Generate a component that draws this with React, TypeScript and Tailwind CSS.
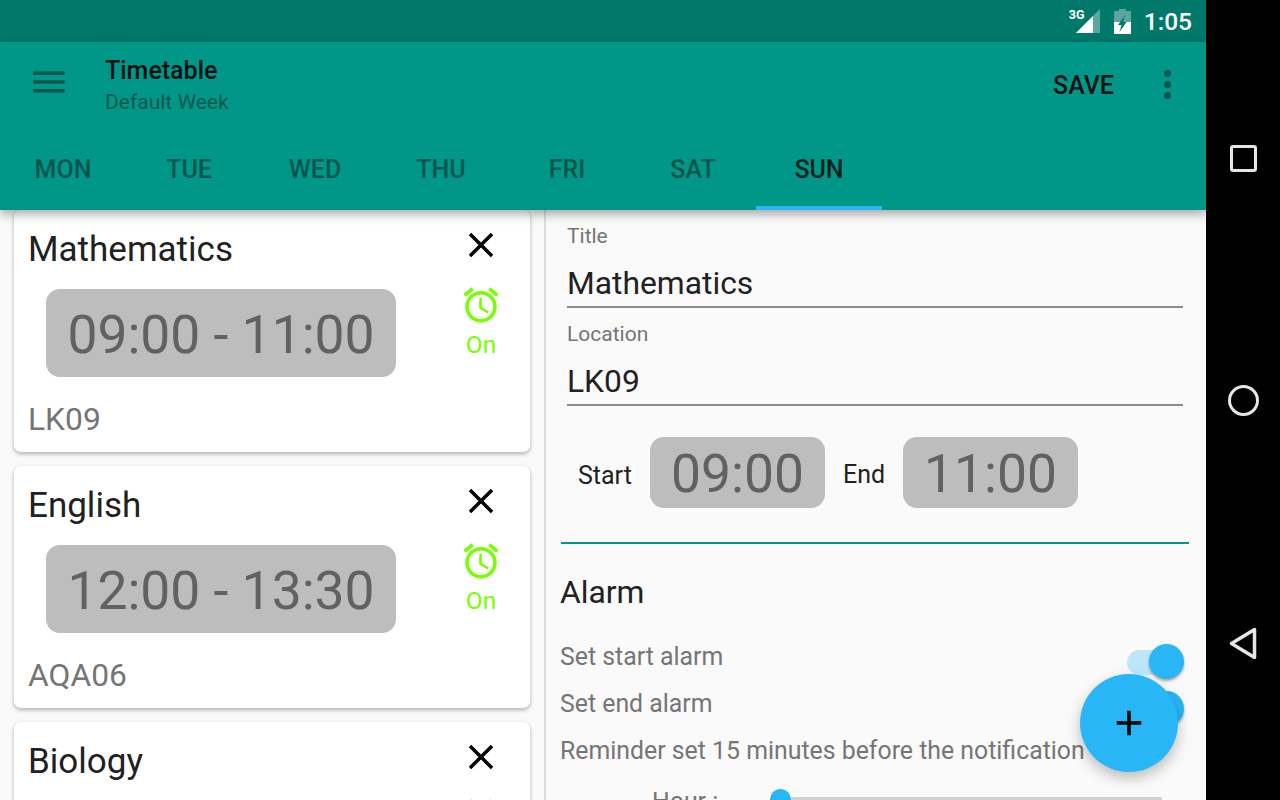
const days = ["MON", "TUE", "WED", "THU", "FRI", "SAT", "SUN"]

const lessons = [
  { title: "Mathematics", time: "09:00 - 11:00", room: "LK09" },
  { title: "English", time: "12:00 - 13:30", room: "AQA06" },
  { title: "Biology" },
]

function StatusBar() {
  return (
    <div className="flex h-[42px] shrink-0 items-center justify-end bg-[#00796b] pr-[14px] text-white">
      <div className="relative h-[42px] w-[36px]">
        <span className="absolute left-[5px] top-[8px] text-[12.500px] font-bold leading-[14px]">3G</span>
        <svg className="absolute left-[12px] top-[9px]" width="24" height="24" viewBox="0 0 24 24">
          <polygon points="24,0 24,24 0,24" fill="#fff" fillOpacity="0.35" />
          <polygon points="17,7 17,24 0,24" fill="#fff" />
        </svg>
      </div>
      <svg className="ml-[14px]" width="17" height="25" viewBox="0 0 17 25">
        <path d="M5 0h7v2h5v23H0V2h5z" fill="#fff" fillOpacity="0.35" />
        <path d="M0 13h17v12H0z" fill="#fff" />
        <path d="M11 6L4 16h3.500L5.500 23l7-10H9z" fill="#00796b" />
      </svg>
      <span className="ml-[13px] pt-[2px] text-[24.500px] font-medium leading-none">1:05</span>
    </div>
  )
}

function AppBar() {
  return (
    <div className="relative z-10 h-[168px] shrink-0 bg-[#009688] shadow-[0_4px_10px_rgba(0,0,0,0.35)]">
      <div className="flex h-[98px] items-center pb-[18px]">
        <svg className="ml-[28px] text-[#00564c]" width="42" height="42" viewBox="0 0 24 24" fill="currentColor">
          <path d="M3 18h18v-2H3v2zm0-5h18v-2H3v2zm0-5h18V6H3v2z" />
        </svg>
        <div className="ml-[35px] flex-1 pt-[10px]">
          <div className="pt-[1px] text-[25px] font-medium leading-[29px] text-black/90">Timetable</div>
          <div className="text-[21px] leading-[34px] text-[#00564c]">Default Week</div>
        </div>
        <span className="pt-[8px] text-[25px] font-medium text-black/90">SAVE</span>
        <div className="ml-[32px] mr-[18px] flex w-[42px] flex-col items-center gap-[4px] pt-[4px]">
          <span className="h-[7px] w-[7px] rounded-full bg-[#00564c]" />
          <span className="h-[7px] w-[7px] rounded-full bg-[#00564c]" />
          <span className="h-[7px] w-[7px] rounded-full bg-[#00564c]" />
        </div>
      </div>
      <div className="flex h-[70px]">
        {days.map((day) => (
          <div
            key={day}
            className={`flex h-[70px] w-[126px] items-center justify-center text-[25px] font-medium ${
              day === "SUN" ? "border-b-[4px] border-[#29b6f6] pb-[6px] text-black/80" : "pb-[10px] text-[#00564c]"
            }`}
          >
            {day}
          </div>
        ))}
      </div>
    </div>
  )
}

function LessonCard({ title, time, room }: { title: string; time?: string; room?: string }) {
  return (
    <div className="flex h-[242px] shrink-0 overflow-hidden rounded-[7px] bg-white shadow-[0_2px_4px_rgba(0,0,0,0.3)]">
      <div className="w-[417px] shrink-0">
        <div className="flex h-[79px] items-center pl-[14px] pt-[2px] text-[35px] text-[#212121]">{title}</div>
        {time && (
          <div className="ml-[32px] flex h-[88px] w-[350px] items-center justify-center rounded-[14px] bg-[#bdbdbd] pt-[4px] text-[53.400px] text-[#616161]">
            {time}
          </div>
        )}
        {room && <div className="mt-[25px] pl-[14px] text-[31.800px] leading-[34px] text-[#757575]">{room}</div>}
      </div>
      <div className="flex flex-1 flex-col items-center pl-[1px] pt-[14px]">
        <svg width="42" height="42" viewBox="0 0 24 24" fill="#000">
          <path d="M19 6.41L17.59 5 12 10.59 6.41 5 5 6.41 10.59 12 5 17.59 6.41 19 12 13.41 17.59 19 19 17.59 13.41 12z" />
        </svg>
        <svg className="mt-[18px]" width="42" height="42" viewBox="0 0 24 24" fill="#76ff03">
          <path d="M22 5.72l-4.6-3.86-1.29 1.53 4.6 3.86L22 5.72zM7.88 3.39L6.6 1.86 2 5.71l1.29 1.53 4.59-3.85zM12.500 8H11v6l4.75 2.85.75-1.23-4-2.37V8zM12 4c-4.97 0-9 4.03-9 9s4.03 9 9 9 9-4.030 9-9-4.030-9-9-9zm0 16c-3.870 0-7-3.130-7-7s3.130-7 7-7 7 3.130 7 7-3.130 7-7 7z" />
        </svg>
        {time && <div className="mt-[4px] text-[24.500px] leading-[30px] text-[#76ff03]">On</div>}
      </div>
    </div>
  )
}

function Field({ label, value }: { label: string; value: string }) {
  return (
    <div className="ml-[21px] mr-[23px] h-[98px]">
      <div className="flex h-[26px] items-end text-[21px] leading-[26px] text-[#757575]">{label}</div>
      <div className="flex h-[59px] items-center border-b-[2px] border-[#8a8a8a] pt-[13px] text-[31.800px] text-[#212121]">
        {value}
      </div>
    </div>
  )
}

function TimeChip({ value }: { value: string }) {
  return (
    <div className="flex h-[71px] w-[175px] items-center justify-center rounded-[14px] bg-[#bdbdbd] pt-[4px] text-[53.400px] text-[#616161]">
      {value}
    </div>
  )
}

function AlarmRow({ label }: { label: string }) {
  return (
    <div className="relative flex h-[47px] items-center text-[24.850px] text-[#757575]">
      {label}
      <div className="absolute left-[568px] top-[14px] h-[25px] w-[56px]">
        <div className="absolute left-[-1px] top-[3px] h-[25px] w-[56px] rounded-full bg-[#bee6fb]" />
        <div className="absolute left-[21px] top-[-3px] h-[35px] w-[35px] rounded-full bg-[#29b6f6] shadow-[0_2px_3px_rgba(0,0,0,0.35)]" />
      </div>
    </div>
  )
}

export default function App() {
  return (
    <div className="flex h-[800px] w-[1280px] overflow-hidden bg-black font-['Roboto',sans-serif]">
      <div className="relative flex w-[1206px] shrink-0 flex-col">
        <StatusBar />
        <AppBar />
        <div className="flex min-h-0 flex-1 bg-[#fafafa]">
          <div className="flex w-[544px] shrink-0 flex-col gap-[14px] overflow-hidden px-[14px]">
            {lessons.map((l) => (
              <LessonCard key={l.title} {...l} />
            ))}
          </div>
          <div className="w-[2px] shrink-0 bg-[#dcdcdc]" />
          <div className="min-w-0 flex-1 overflow-hidden">
            <div className="pt-[13px]">
              <Field label="Title" value="Mathematics" />
              <Field label="Location" value="LK09" />
            </div>
            <div className="mt-[18px] flex items-center pl-[32px] text-[25px] text-[#212121]">
              <span className="w-[72px] pt-[7px]">Start</span>
              <TimeChip value="09:00" />
              <span className="ml-[18px] w-[60px] pt-[5px]">End</span>
              <TimeChip value="11:00" />
            </div>
            <div className="ml-[15px] mr-[17px] mt-[34px] h-[2px] bg-[#009688]" />
            <div className="ml-[14px] mr-[17px]">
              <div className="flex h-[96px] items-center pt-[2px] text-[31.800px] text-[#212121]">Alarm</div>
              <div className="mt-[-7px]">
                <AlarmRow label="Set start alarm" />
                <AlarmRow label="Set end alarm" />
                <div className="flex h-[47px] items-center whitespace-nowrap text-[24.850px] text-[#757575]">
                  Reminder set 15 minutes before the notification
                </div>
              </div>
              <div className="flex h-[40px] items-start">
                <span className="ml-[92px] mt-[13px] text-[24.850px] leading-[30px] text-[#757575]">Hour :</span>
                <div className="relative ml-[62px] mt-[23px] h-[4px] w-[382px] bg-[#d2d2d2]">
                  <div className="absolute left-[-10px] top-[-8px] h-[21px] w-[21px] rounded-full bg-[#29b6f6]" />
                </div>
              </div>
            </div>
          </div>
        </div>
        <button className="absolute bottom-[28px] right-[28px] z-20 flex h-[98px] w-[98px] items-center justify-center rounded-full bg-[#29b6f6] shadow-[0_6px_14px_rgba(0,0,0,0.25)]">
          <svg width="42" height="42" viewBox="0 0 24 24" fill="#000">
            <path d="M19 13h-6v6h-2v-6H5v-2h6V5h2v6h6v2z" />
          </svg>
        </button>
      </div>
      <div className="flex w-[74px] shrink-0 flex-col items-center pt-[145px]">
        <div className="h-[27px] w-[27px] rounded-[3px] border-[3.500px] border-[#e6e6e6]" />
        <div className="mt-[213px] h-[31px] w-[31px] rounded-full border-[3.500px] border-[#e6e6e6]" />
        <svg className="mt-[211px]" width="28" height="33" viewBox="0 0 28 33" fill="none">
          <path d="M25.500 2.500V30.500L2.500 16.500z" stroke="#e6e6e6" strokeWidth="3.500" strokeLinejoin="round" />
        </svg>
      </div>
    </div>
  )
}
